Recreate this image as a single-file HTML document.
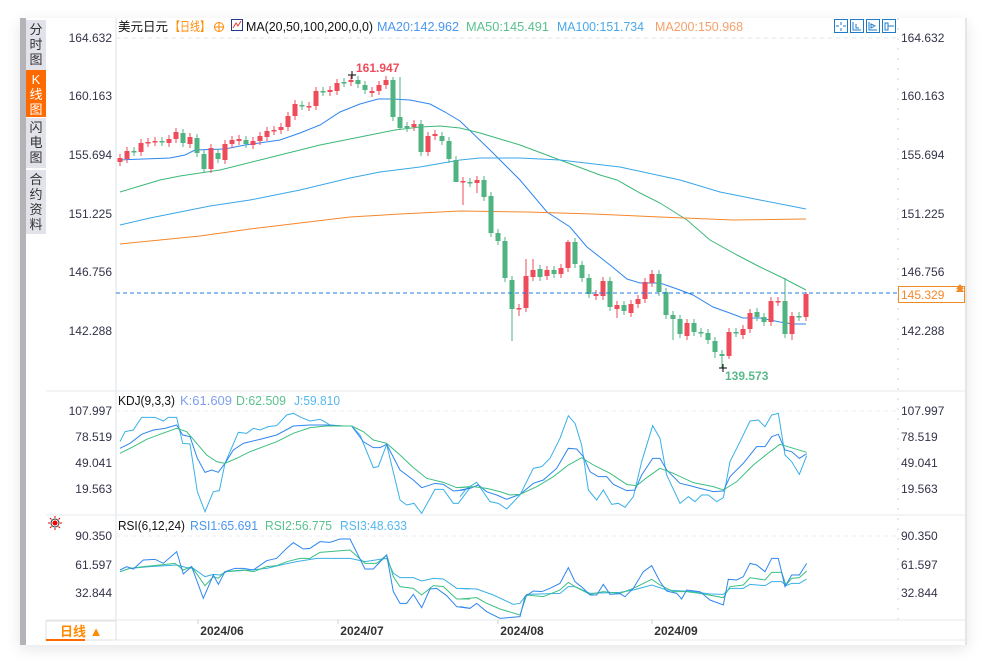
<!DOCTYPE html>
<html><head><meta charset="utf-8">
<style>
body{margin:0;width:988px;height:662px;background:#fff;position:relative;overflow:hidden;font-family:"Liberation Sans","Noto Sans CJK SC",sans-serif;}
.card{position:absolute;left:20px;top:18px;width:947px;height:627px;background:#fff;box-shadow:0 4px 14px rgba(0,0,0,0.10);}
.gbar{position:absolute;left:20px;top:18px;width:6px;height:627px;background:#b4b4b8;}
.tab{position:absolute;left:26px;width:20px;background:#e2e2ea;color:#333;font-size:13px;line-height:15px;text-align:center;}
.tab.on{background:#ff6a00;color:#fff;}
svg{position:absolute;left:0;top:0;}
</style></head><body>
<div class="card"></div>
<div class="gbar"></div>
<div class="tab" style="top:20px;height:48px;padding-top:2px">分<br>时<br>图</div>
<div class="tab on" style="top:70px;height:45px;padding-top:2px">K<br>线<br>图</div>
<div class="tab" style="top:118px;height:48px;padding-top:2px">闪<br>电<br>图</div>
<div class="tab" style="top:170px;height:62px;padding-top:2px">合<br>约<br>资<br>料</div>
<svg id="s" width="988" height="662" xmlns="http://www.w3.org/2000/svg"></svg>
<script>
var s=document.getElementById('s'),h='';
function L(x1,y1,x2,y2,c,w,d){h+='<line x1="'+x1+'" y1="'+y1+'" x2="'+x2+'" y2="'+y2+'" stroke="'+c+'" stroke-width="'+(w||1)+'"'+(d?' stroke-dasharray="'+d+'"':'')+'/>';}
function T(x,y,t,c,a,sz,wt,tl){h+='<text x="'+x+'" y="'+y+'" fill="'+c+'" font-size="'+(sz||12)+'"'+(a?' text-anchor="'+a+'"':'')+(wt?' font-weight="bold"':'')+(tl?' textLength="'+tl+'" lengthAdjust="spacingAndGlyphs"':'')+'>'+t+'</text>';}
function P(pts,c){h+='<polyline fill="none" stroke="'+c+'" stroke-width="1" points="'+pts.map(function(p){return p[0]+','+p[1]}).join(' ')+'"/>';}
function Z(a,ox){var r=[];for(var i=0;i<a.length;i+=2)r.push([ox+a[i]/3,395+a[i+1]/3]);return r;}
L(116,18,116,620,'#dde3ea');L(898,18,898,620,'#cfd5dc',1,'2,8');L(966,18,966,645,'#c8ccd2');
L(46,391,966,391,'#e6e8ec');L(46,515,966,515,'#e6e8ec');L(46,620,966,620,'#e6e8ec');L(46,640,966,640,'#e6e8ec');
L(116,38,898,38,'#e4e6ea',1,'4,4');L(116,411,898,411,'#eceef0',1,'4,4');L(116,536,898,536,'#eceef0',1,'4,4');
[['164.632',42],['160.163',100],['155.694',159],['151.225',218],['146.756',276],['142.288',335]].forEach(function(a){T(112,a[1],a[0],'#33334a','end');T(901,a[1],a[0],'#33334a');});
[['107.997',415],['78.519',441],['49.041',467],['19.563',493]].forEach(function(a){T(112,a[1],a[0],'#33334a','end');T(901,a[1],a[0],'#33334a');});
[['90.350',540],['61.597',569],['32.844',597]].forEach(function(a){T(112,a[1],a[0],'#33334a','end');T(901,a[1],a[0],'#33334a');});
P([[119,160],[170,158],[185,155],[195,150],[225,149],[245,145],[280,140],[300,133],[320,125],[340,112],[360,104],[378,99],[392,99],[410,100],[430,104],[445,112],[460,121],[490,150],[520,180],[547,212],[570,227],[587,247],[610,265],[627,279],[640,283],[660,283],[680,290],[693,295],[713,307],[727,312],[743,318],[760,318],[780,322],[793,324],[806,324]],'#2e86ef');
P([[120,192],[140,186],[160,180],[180,176],[200,173],[220,170],[240,165],[260,160],[280,155],[300,150],[320,145],[340,141],[360,137],[380,133],[395,130],[420,127],[440,126],[460,128],[480,133],[520,145],[560,160],[600,175],[617,180],[640,193],[660,203],[687,220],[710,240],[737,255],[760,267],[783,278],[806,290]],'#3cb878');
P([[120,225],[150,218],[180,212],[210,206],[250,200],[300,190],[350,178],[380,172],[420,167],[460,160],[480,158],[520,158],[560,160],[620,167],[680,180],[720,192],[760,200],[806,209]],'#39a6e8');
P([[120,244],[160,240],[200,236],[250,229],[300,223],[350,217],[400,214],[440,212],[460,211],[527,212],[593,214],[660,217],[733,220],[806,219]],'#f5872b');
var C=[['r',158,162],['r',151,159],['g',151,152],['r',143,152],['r',142,143],['r',141,142],['g',141,142],['r',139,143],['r',132,139],['g',133,143],['r',137,144],['g',138,153],['g',154,169],['r',148,169],['g',153,159],['r',144,160],['r',140,144],['r',139,141],['g',140,144],['r',141,145],['r',136,141],['r',131,137],['r',130,131],['r',127,130],['r',116,127],['r',104,116],['g',105,106],['r',106,107],['r',91,106],['g',91,92],['r',90,92],['r',83,91],['g',82,83],['r',80,82],['g',80,84],['g',85,90],['r',91,93],['r',85,91],['r',80,85],['g',80,117],['g',117,128],['g',126,128],['r',124,127],['g',124,152],['r',136,152],['r',134,136],['g',136,141],['g',141,159],['g',160,182],['r',181,182],['g',182,183],['r',180,183],['g',180,197],['g',196,233],['g',233,241],['g',241,278],['g',280,309],['r',308,309],['r',276,308],['r',270,277],['g',269,277],['r',270,276],['g',270,274],['r',268,274],['r',242,268],['g',242,264],['g',265,278],['g',278,294],['r',294,296],['r',281,296],['g',281,307],['r',305,309],['g',305,311],['r',304,313],['r',299,304],['r',282,299],['r',274,283],['g',274,292],['g',292,315],['g',315,319],['g',319,334],['r',323,336],['g',323,332],['g',332,333],['g',333,340],['g',341,352],['g',354,356],['r',332,356],['g',332,333],['r',329,335],['r',313,329],['g',312,317],['g',317,322],['r',301,322],['r',301,302],['g',301,334],['r',316,334],['g',316,317],['r',294,317]];
var wk={39:[77,0],40:[77,130],48:[0,165],49:[0,205],51:[0,193],56:[0,341],57:[0,316],58:[259,0],59:[259,0],64:[240,0],71:[0,318],79:[0,340],85:[0,358],86:[0,368],87:[0,359],95:[278,0],96:[0,340],98:[292,0]};
C.forEach(function(c,i){var x=120+i*7,col=c[0]=='r'?'#ee4b5b':'#4fb382';var t=c[1]-4,b=c[2]+4;if(wk[i]){if(wk[i][0])t=wk[i][0];if(wk[i][1])b=wk[i][1];}
L(x,t,x,b,col);var hh=Math.max(c[2]-c[1],1.5);h+='<rect x="'+(x-2.5)+'" y="'+c[1]+'" width="5" height="'+hh+'" fill="'+col+'"/>';});
L(116,293,898,293,'#1e7be0',1,'4,3');
h+='<rect x="898.5" y="286.5" width="66" height="16" fill="#fff" stroke="#f08a24"/>';T(901,299,'145.329','#f5872b');
h+='<path d="M956 292 L960 286 L964 292Z M956 289 L960 284 L964 289" fill="#f08a24"/>';
T(356,72,'161.947','#ee4b5b','start',12,1);L(348,75,356,75,'#000');L(352,71,352,79,'#000');
T(725,380,'139.573','#5ab98a','start',12,1);L(719,368,727,368,'#000');L(723,364,723,372,'#000');
P(Z([0,305,20,280,50,262,90,320,115,325,140,342,180,300,220,220,245,215,270,190,300,130,325,62,345,85,365,150,385,285,410,315,430,285,455,328,475,325,495,337,520,305,545,200,578,92,600,130,620,240,660,325,685,305,705,320,725,300,745,300,770,320,790,308,810,200,840,140,870,78,895,75,915,95,935,60,955,55,975,180,995,200,1018,238,1040,182],460),'#3ab0e8');
P(Z([30,140,45,110,70,105,95,67,135,67,160,78,175,67,200,67,218,145,240,147,262,290,285,350,310,290,328,287,345,205,385,112,410,115,430,100,450,105,475,95,500,92,530,60,550,55,575,68,600,78,630,73,640,78,660,90,700,93,725,93,750,120,790,218,805,215,830,148,870,315,890,330,912,325,935,355,975,283,1000,283,1030,325,1045,325,1080,278],110),'#3ab0e8');
P(Z([30,160,60,145,95,118,130,105,165,100,200,90,218,120,240,125,262,190,285,232,305,225,325,232,345,205,370,165,400,145,450,133,500,120,550,93,600,90,650,90,700,93,725,93,760,140,790,158,810,158,830,148,870,225,910,255,935,278,975,265,1000,268,1030,288,1060,285,1080,278],110),'#2e86ef');
P(Z([0,285,30,280,55,270,80,290,110,300,140,313,180,298,220,265,250,255,290,220,325,160,350,162,370,185,390,230,415,245,440,245,460,268,500,287,525,285,545,240,578,190,600,190,620,225,660,265,690,272,720,280,760,290,790,288,810,245,850,205,890,155,915,155,935,125,955,118,975,165,995,170,1018,190,1040,176],460),'#2e86ef');
P(Z([30,175,70,155,110,133,150,118,200,100,230,110,260,145,290,180,320,200,345,205,380,190,420,170,460,155,500,140,550,115,600,98,650,93,725,93,760,110,790,135,830,145,870,180,910,218,950,250,1000,262,1040,278,1080,275],110),'#3cbf80');
P(Z([0,278,40,275,80,280,120,290,150,300,180,298,230,275,280,245,325,210,365,188,400,210,450,235,500,268,530,272,560,248,600,220,640,235,700,263,760,275,790,285,830,260,880,210,930,170,960,148,1000,160,1040,172],460),'#3cbf80');
P(Z([30,530,60,520,120,515,200,510,230,518,250,520,285,545,310,538,330,540,350,530,420,525,470,520,520,508,560,500,620,490,720,490,765,500,830,490,850,535,870,548,910,548,935,558,970,550,1000,552,1040,580,1080,582],110),'#3ab0e8');
P(Z([0,580,50,582,100,600,160,628,180,625,200,598,300,595,325,575,345,575,390,595,480,592,520,585,575,570,620,585,700,590,750,597,790,598,810,580,850,580,870,568,915,572,935,560,965,560,978,572,995,565,1018,565,1040,552],460),'#3ab0e8');
P(Z([30,530,60,520,100,515,150,510,195,505,220,525,245,515,285,572,310,545,325,550,345,530,400,525,430,530,470,515,500,512,530,500,570,490,600,490,630,472,720,465,765,505,800,505,830,480,850,545,870,575,910,580,935,600,970,572,1000,575,1040,612,1080,612],110),'#3cbf80');
P(Z([0,612,50,608,80,625,120,642,180,660,200,600,250,605,300,585,325,562,345,575,390,598,430,590,480,595,520,580,575,553,600,570,640,590,680,590,720,595,790,608,810,575,850,570,870,548,915,555,935,532,965,532,978,570,995,550,1018,548,1040,528],460),'#3cbf80');
P(Z([30,525,50,515,70,522,100,495,135,493,160,505,200,470,220,537,245,515,280,610,310,540,325,568,345,530,375,520,400,520,430,525,470,497,500,490,530,460,550,443,580,462,600,460,630,440,660,442,690,432,720,432,765,522,790,522,830,480,850,590,870,625,890,625,910,598,935,638,960,582,980,580,1010,602,1040,635,1080,640],110),'#2e86ef');
P(Z([0,635,30,640,50,625,80,650,120,670,180,665,195,605,220,588,245,590,270,580,300,565,325,518,345,560,370,580,390,600,410,600,430,568,450,598,480,596,495,605,520,580,550,530,575,512,600,560,620,588,650,595,665,612,680,585,720,590,750,615,790,630,805,553,830,555,850,545,870,505,890,510,915,530,935,490,955,490,975,575,995,540,1018,540,1040,505],460),'#2e86ef');
T(118,31,'美元日元','#111','start',12.5,0,50);T(170,31,'【日线】','#ff8a00','start',12.5,0,40);
h+='<circle cx="219" cy="27" r="4.5" fill="none" stroke="#ff8a00"/><path d="M214.5 27h9M219 22.5v9" stroke="#ff8a00"/>';
h+='<rect x="231.5" y="19.5" width="11" height="11" fill="#fff" stroke="#223a8a"/><path d="M233 28 L236 23 L238 26 L241 21" stroke="#e33" fill="none"/>';
T(246,31,'MA(20,50,100,200,0,0)','#111','start',12.5,0,127);T(377,31,'MA20:142.962','#4a96f0','start',12.5,0,82);T(466,31,'MA50:145.491','#5ac18e','start',12.5,0,83);T(557,31,'MA100:151.734','#4aa8e8','start',12.5,0,87);T(655,31,'MA200:150.968','#f5a06a','start',12.5,0,88);
T(118,405,'KDJ(9,3,3)','#111','start',12.5,0,57);T(180,405,'K:61.609','#7fa0ee','start',12.5,0,52);T(236,405,'D:62.509','#5ac18e','start',12.5,0,50);T(294,405,'J:59.810','#55b8ee','start',12.5,0,46);
T(118,530,'RSI(6,12,24)','#111','start',12.5,0,67);T(190,530,'RSI1:65.691','#4a96f0','start',12.5,0,68);T(265,530,'RSI2:56.775','#5ac18e','start',12.5,0,67);T(340,530,'RSI3:48.633','#55b8ee','start',12.5,0,67);
h+='<circle cx="55" cy="523" r="2.5" fill="#e00"/><circle cx="55" cy="523" r="4" fill="none" stroke="#333"/><path d="M55 516v2M55 528v2M48 523h2M60 523h2M50 518l1.5 1.5M60 518l-1.5 1.5M50 528l1.5-1.5M60 528l-1.5-1.5" stroke="#e00"/>';
[834,850,866,882].forEach(function(x){h+='<rect x="'+(x+0.5)+'" y="19.5" width="13" height="13" fill="#fff" stroke="#1f7bc8"/>';});
h+='<path d="M841 22v3M841 28v3M836 26h3M843 26h3M853 22v8h8M856 24v4h3M869 22v8h8M871 24l4 2-4 2z M885 23v7h3v-7zM888 26h6" stroke="#1f7bc8" fill="none"/>';
h+='<rect x="46" y="621" width="70" height="19" fill="#fff" stroke="#e0e0e0"/>';T(60,636,'日线 ▲','#ff8a00','start',13,1);L(46,640,85,640,'#ff6a00',2);
[['2024/06',222],['2024/07',362],['2024/08',522],['2024/09',676]].forEach(function(a){T(a[1],635,a[0],'#333','middle',12,1);L(a[1]-24,620,a[1]-24,624,'#ccc');});
s.innerHTML=h;
</script>
</body></html>
